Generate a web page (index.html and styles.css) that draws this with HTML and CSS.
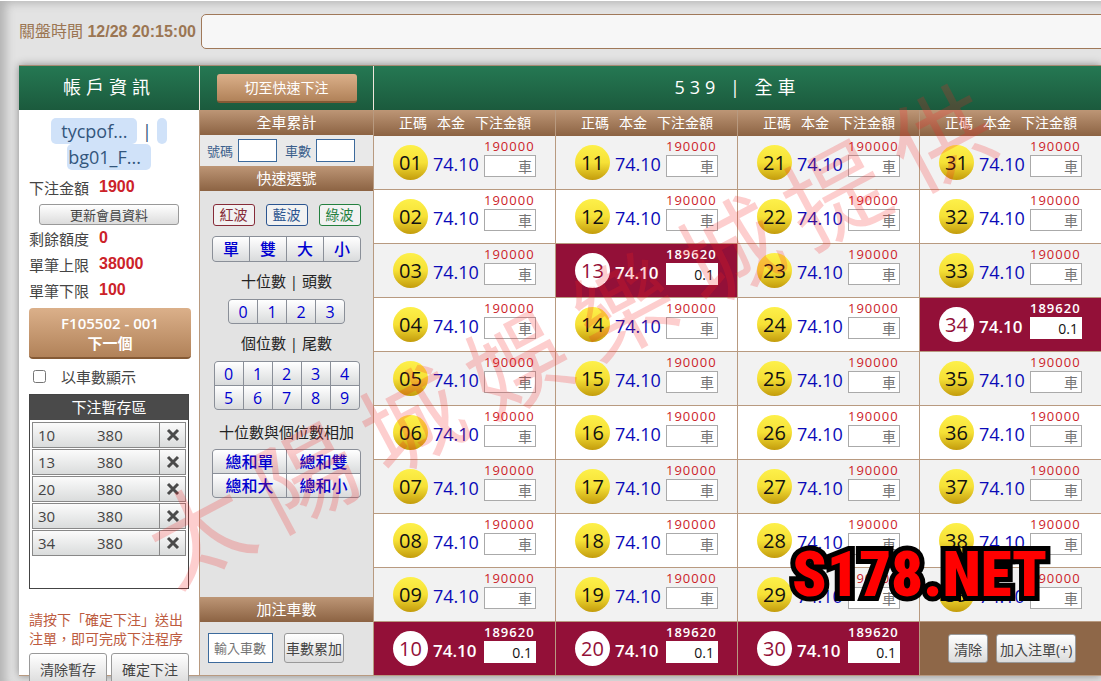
FILE: index.html
```html
<!DOCTYPE html>
<html lang="zh-Hant">
<head>
  <meta charset="UTF-8" />
  <meta name="viewport" content="width=device-width, initial-scale=1.0" />
  <title>539 | 全車</title>
  <link rel="stylesheet" href="styles.css">
</head>
<body>
  <header class="topbar">
    <p class="close-time">關盤時間 <b>12/28 20:15:00</b></p>
    <div class="marquee"></div>
  </header>

  <main class="board">
    <section class="account">
      <h2 class="panel-title">帳戶資訊</h2>
      <div class="account-body">
        <p class="user">
          <span class="mark">tycpof...</span> | <span class="mark tail"></span><br>
          <span class="mark second">bg01_F...</span>
        </p>
        <p class="info">下注金額<b>1900</b></p>
        <button class="btn refresh">更新會員資料</button>
        <p class="info">剩餘額度<b>0</b></p>
        <p class="info">單筆上限<b>38000</b></p>
        <p class="info">單筆下限<b>100</b></p>
        <button class="btn-gold next">F105502 - 001<br>下一個</button>
        <label class="by-car"><input type="checkbox"> 以車數顯示</label>
        <div class="temp">
          <h3>下注暫存區</h3>
          <table>
            <tbody id="temp-rows"></tbody>
          </table>
        </div>
        <p class="hint">請按下「確定下注」送出注單，即可完成下注程序</p>
        <div class="account-actions">
          <button class="btn">清除暫存</button>
          <button class="btn">確定下注</button>
        </div>
      </div>
    </section>

    <section class="quick">
      <div class="panel-title"><button class="btn-gold switch">切至快速下注</button></div>
      <h3 class="bar">全車累計</h3>
      <div class="totals">
        <label for="total-no">號碼</label><input id="total-no" type="text">
        <label for="total-car">車數</label><input id="total-car" type="text">
      </div>
      <h3 class="bar">快速選號</h3>
      <div class="picks">
        <div class="waves">
          <button class="wave red">紅波</button>
          <button class="wave blue">藍波</button>
          <button class="wave green">綠波</button>
        </div>
        <div class="keys keys-4">
          <button>單</button><button>雙</button><button>大</button><button>小</button>
        </div>
        <p>十位數 | 頭數</p>
        <div class="keys keys-head">
          <button>0</button><button>1</button><button>2</button><button>3</button>
        </div>
        <p>個位數 | 尾數</p>
        <div class="keys keys-5">
          <button>0</button><button>1</button><button>2</button><button>3</button><button>4</button>
          <button>5</button><button>6</button><button>7</button><button>8</button><button>9</button>
        </div>
        <p>十位數與個位數相加</p>
        <div class="keys keys-2">
          <button>總和單</button><button>總和雙</button>
          <button>總和大</button><button>總和小</button>
        </div>
      </div>
      <h3 class="bar">加注車數</h3>
      <div class="add">
        <input type="text" placeholder="輸入車數" aria-label="輸入車數">
        <button class="btn">車數累加</button>
      </div>
    </section>

    <section class="numbers">
      <h2 class="panel-title">539 | 全車</h2>
      <table class="odds">
        <thead><tr id="odds-head"></tr></thead>
        <tbody id="odds-rows"></tbody>
      </table>
    </section>
  </main>

  <div class="watermark" aria-hidden="true">
    <span>太</span><span>陽</span><span>城</span><span>娛</span><span>樂</span><span>城</span><span>提</span><span>供</span>
  </div>
  <div class="brand">S178.NET</div>

  <script src="script.js"></script>
</body>
</html>
```

FILE: styles.css
```css
:root {
  --brown: #8e6748;
  --line: #b89a80;
  --wine: #931038;
  --blue: #0a0ab8;
}
* {
  box-sizing: border-box;
  margin: 0;
  padding: 0;
}
html {
  overflow: hidden;
}
body {
  position: relative;
  min-height: 100vh;
  padding: 13px 0 0 19px;
  background: #e3e3e3;
  border-top: 1px solid #fff;
  box-shadow: inset 8px 4px 10px -2px #b4b4b4;
  color: #444;
  font-family: "Open Sans", "Noto Sans CJK TC", sans-serif;
  font-size: 15px;
}
button, input {
  font-family: inherit;
  font-size: 14px;
}
h2, h3 {
  font-weight: 400;
}
table {
  width: 100%;
  border-spacing: 0;
}

/* top bar */
.topbar {
  display: flex;
  align-items: center;
  gap: 5px;
  height: 35px;
  margin-bottom: 16px;
}
.close-time {
  color: #9b7653;
  font-family: "Liberation Sans", "Noto Sans CJK TC", sans-serif;
  font-size: 16px;
  line-height: 30px;
  white-space: nowrap;
}
.marquee {
  flex: 1;
  height: 35px;
  margin-right: -8px;
  background: #f7f7f7;
  border: 1px solid #a0795a;
  border-radius: 5px;
}

/* board */
.board {
  display: grid;
  grid-template-columns: 181px 173px 1fr;
  border-top: 1px solid #a58a72;
  border-bottom: 1px solid var(--line);
  box-shadow: 0 0 8px #888;
}
.panel-title {
  display: flex;
  align-items: center;
  justify-content: center;
  height: 44px;
  padding-bottom: 4px;
  background: linear-gradient(#257853, #1b5a3d);
  color: #fff;
  font-size: 18px;
  letter-spacing: 5px;
}
.account .panel-title {
  margin-right: -1px;
  border-right: 1px solid #f0e6dc;
}
.quick .panel-title {
  padding-bottom: 0;
}
.bar {
  height: 25px;
  background: linear-gradient(#bd9676, #8c6343);
  color: #fff;
  font-size: 15px;
  line-height: 25px;
  text-align: center;
}
.btn {
  background: linear-gradient(#fff, #dcdcdc);
  border: 1px solid #999;
  border-radius: 3px;
  color: #444;
}
.btn-gold {
  background: linear-gradient(#dbb08a, #b18259);
  border: 0;
  border-bottom: 2px solid #855a35;
  border-radius: 4px;
  color: #fff;
}

/* account */
.account {
  background: #fff;
  border-right: 1px solid var(--line);
}
.account-body {
  display: flex;
  flex-direction: column;
  padding: 8px 10px 0;
}
.user {
  margin-bottom: 4px;
  color: #33567d;
  font-size: 18px;
  line-height: 26px;
  text-align: center;
  white-space: nowrap;
}
.mark {
  display: inline-block;
  padding: 0 10px;
  background: #d0e2f9;
  border-radius: 5px;
}
.mark.second {
  padding-left: 1px;
}
.mark.tail {
  width: 10px;
  height: 26px;
  padding: 0;
  vertical-align: top;
}
.info {
  display: flex;
  align-items: center;
  gap: 10px;
  height: 26px;
}
.info b {
  color: #cc2229;
  font-family: "Liberation Sans", sans-serif;
  font-size: 16px;
}
.refresh {
  height: 21px;
  margin: 4px 10px 0;
  font-size: 13px;
  line-height: 18px;
}
.next {
  height: 51px;
  margin-top: 5px;
  margin-right: -2px;
  font-size: 15px;
  font-weight: 600;
  line-height: 20px;
}
.by-car {
  display: flex;
  align-items: center;
  gap: 15px;
  height: 35px;
  padding-left: 4px;
}
.by-car input {
  width: 13px;
  height: 13px;
}
.temp {
  height: 195px;
  padding: 0 2px;
  border: 1px solid #444;
}
.temp h3 {
  height: 25px;
  margin: 0 -2px 2px;
  background: #4a4a4a;
  color: #fff;
  font-size: 15px;
  line-height: 25px;
  text-align: center;
}
.temp td {
  height: 26px;
  padding-left: 5px;
  background: linear-gradient(#fbfbfb, #dadcdc);
  border: solid #888;
  border-width: 1px 0;
  line-height: 20px;
}
.temp table {
  border-spacing: 0 1px;
  margin-top: -1px;
}
.temp td:first-child {
  width: 60px;
  border-left-width: 1px;
}
.temp td:last-child {
  width: 27px;
  padding: 0;
  border-width: 1px;
  text-align: center;
}
.remove {
  display: block;
  width: 100%;
  height: 24px;
  background: none;
  border: 0;
}
.remove svg {
  display: block;
  margin: auto;
}
.hint {
  margin: 21px 0 5px;
  color: #bd5b40;
  font-size: 14px;
  line-height: 19px;
}
.account-actions {
  display: flex;
  gap: 4px;
  margin-bottom: -12px;
}
.account-actions .btn {
  flex: 1;
  height: 31px;
}

/* quick picks */
.quick {
  display: flex;
  flex-direction: column;
  background: #e3e3e3;
}
.switch {
  width: 140px;
  height: 29px;
  border-radius: 3px;
  font-size: 14px;
}
.totals {
  display: flex;
  align-items: center;
  height: 31px;
  padding-left: 7px;
  gap: 5px;
  background: #e9e9e9;
  color: #3c5f8c;
  font-size: 13px;
}
.totals input {
  width: 39px;
  height: 23px;
  border: 1px solid #3c6a9c;
}
.totals input:first-of-type {
  margin-right: 3px;
}
.picks {
  display: flex;
  flex: 1;
  flex-direction: column;
  align-items: center;
  padding-top: 13px;
  color: #222;
}
.waves {
  display: flex;
  gap: 11px;
  margin-bottom: 10px;
}
.wave {
  width: 42px;
  height: 22px;
  background: #f2f2f2;
  border: 1px solid;
  border-radius: 3px;
  font-size: 14px;
  line-height: 18px;
}
.wave.red { color: #862b38; }
.wave.blue { color: #2c5590; }
.wave.green { color: #24803f; }
.keys {
  display: grid;
  gap: 1px;
  background: #8a8f98;
  border: 1px solid #8a8f98;
  border-radius: 4px;
  overflow: hidden;
}
.keys button {
  height: 23px;
  background: linear-gradient(#fff, #d9dbdc);
  border: 0;
  color: #0000d0;
  font-size: 16px;
  line-height: 22px;
}
.keys-4 { grid-template-columns: repeat(4, 36px); }
.keys-head { grid-template-columns: repeat(4, 28px); }
.keys-5 { grid-template-columns: repeat(5, 28px); }
.keys-2 { grid-template-columns: repeat(2, 73px); }
.keys-4 button {
  height: 24px;
}
.keys-2 button, .keys-4 button {
  font-weight: 500;
}
.picks p {
  height: 37px;
  line-height: 38px;
}
.picks .keys-5 + p {
  height: 39px;
  line-height: 44px;
}
.add {
  display: flex;
  align-items: flex-start;
  gap: 11px;
  height: 53px;
  padding: 11px 0 0 8px;
}
.add input {
  width: 65px;
  height: 30px;
  padding-left: 5px;
  border: 1px solid #3c6a9c;
  font-size: 13px;
}
.add .btn {
  width: 60px;
  height: 30px;
}

/* numbers */
.numbers .panel-title {
  border-left: 1px solid #f0e6dc;
}
.odds {
  table-layout: fixed;
}
.odds th {
  height: 26px;
  background: linear-gradient(#bd9676, #8c6343);
  border-left: 1px solid var(--line);
  color: #fff;
  font-size: 14px;
  font-weight: 400;
}
.heads {
  display: flex;
  gap: 10px;
  padding-left: 25px;
  line-height: 24px;
}
.odds td {
  height: 54px;
  background: #fff;
  border-left: 1px solid var(--line);
  border-bottom: 1px solid var(--line);
}
.odds tr:nth-child(odd) td {
  background: #f2f2f2;
}
.odds tbody tr:last-child td {
  height: 53px;
  border-bottom: 0;
}
.cell {
  display: flex;
  align-items: center;
  gap: 5px;
  height: 53px;
  padding-left: 19px;
}
.ball {
  width: 35px;
  height: 35px;
  background: linear-gradient(#fdf04a, #f6e136 50%, #c39c0c);
  border-radius: 50%;
  color: #111;
  font-size: 20px;
  line-height: 36px;
  text-align: center;
}
.price {
  width: 46px;
  padding-top: 3px;
  color: var(--blue);
  font-size: 18px;
}
.stake {
  align-self: flex-start;
  width: 52px;
  padding-top: 2px;
}
.stake label {
  display: block;
  height: 17px;
  color: #cc2229;
  font-size: 13px;
  letter-spacing: 1px;
  line-height: 17px;
  white-space: nowrap;
}
.stake input {
  display: block;
  width: 52px;
  height: 22px;
  padding-right: 3px;
  background: #fff;
  border: 1px solid #aaa;
  color: #111;
  text-align: right;
}
.stake input::placeholder, .add input::placeholder {
  color: #757575;
}
.odds tr td.picked {
  background: var(--wine);
}
.picked .ball {
  background: #fff;
  color: var(--wine);
}
.picked .price {
  color: #fff;
  font-size: 17px;
  font-weight: 600;
}
.picked label {
  color: #fff;
  font-weight: 600;
}
.picked input {
  border-color: #fff;
}
.odds tr td.actions {
  background: var(--brown);
}
.actions .cell {
  gap: 8px;
  padding-left: 28px;
}
.actions .btn {
  height: 29px;
  padding: 0 5px;
  white-space: nowrap;
}
.actions .btn:last-child {
  padding: 0 3px;
}

/* overlays */
.watermark {
  position: absolute;
  top: 253px;
  left: 100px;
  display: flex;
  gap: 20px;
  color: rgba(245, 30, 30, 0.22);
  font-size: 100px;
  line-height: 160px;
  transform: rotate(-28deg);
  white-space: nowrap;
  pointer-events: none;
}
.brand {
  position: absolute;
  top: 528px;
  left: 792px;
  color: #f00;
  font-family: "Liberation Sans Narrow", "Roboto Condensed", "Open Sans Condensed", "Liberation Sans", sans-serif;
  font-size: 63px;
  font-weight: 900;
  line-height: 92px;
  -webkit-text-stroke: 10px #000;
  paint-order: stroke fill;
  stroke-linejoin: round;
  pointer-events: none;
}
```

FILE: script.js
```js
const picked = [10, 13, 20, 30, 34];

function pad(n) {
  return String(n).padStart(2, '0');
}

// saved bets
document.getElementById('temp-rows').innerHTML = picked.map(n => `
  <tr><td>${n}</td><td>380</td><td><button class="remove" aria-label="刪除 ${n}">
    <svg width="14" height="14" viewBox="0 0 14 14"><path d="M2 2l10 10M12 2L2 12" stroke="#4a4a4a" stroke-width="3"/></svg>
  </button></td></tr>`).join('');

// four columns of ten numbers
document.getElementById('odds-head').innerHTML =
  '<th><div class="heads"><span>正碼</span><span>本金</span><span>下注金額</span></div></th>'.repeat(4);

function numberCell(n) {
  if (n === 40) {
    return `<td class="actions"><div class="cell">
      <button class="btn">清除</button><button class="btn">加入注單(+)</button>
    </div></td>`;
  }
  const on = picked.includes(n);
  return `<td class="${on ? 'picked' : ''}"><div class="cell">
    <span class="ball">${pad(n)}</span>
    <span class="price">74.10</span>
    <div class="stake">
      <label for="n${n}">${on ? 189620 : 190000}</label>
      <input id="n${n}" type="text" placeholder="車" value="${on ? '0.1' : ''}">
    </div>
  </div></td>`;
}

let rows = '';
for (let r = 1; r <= 10; r++) {
  rows += '<tr>' + [0, 10, 20, 30].map(c => numberCell(c + r)).join('') + '</tr>';
}
document.getElementById('odds-rows').innerHTML = rows;
```
